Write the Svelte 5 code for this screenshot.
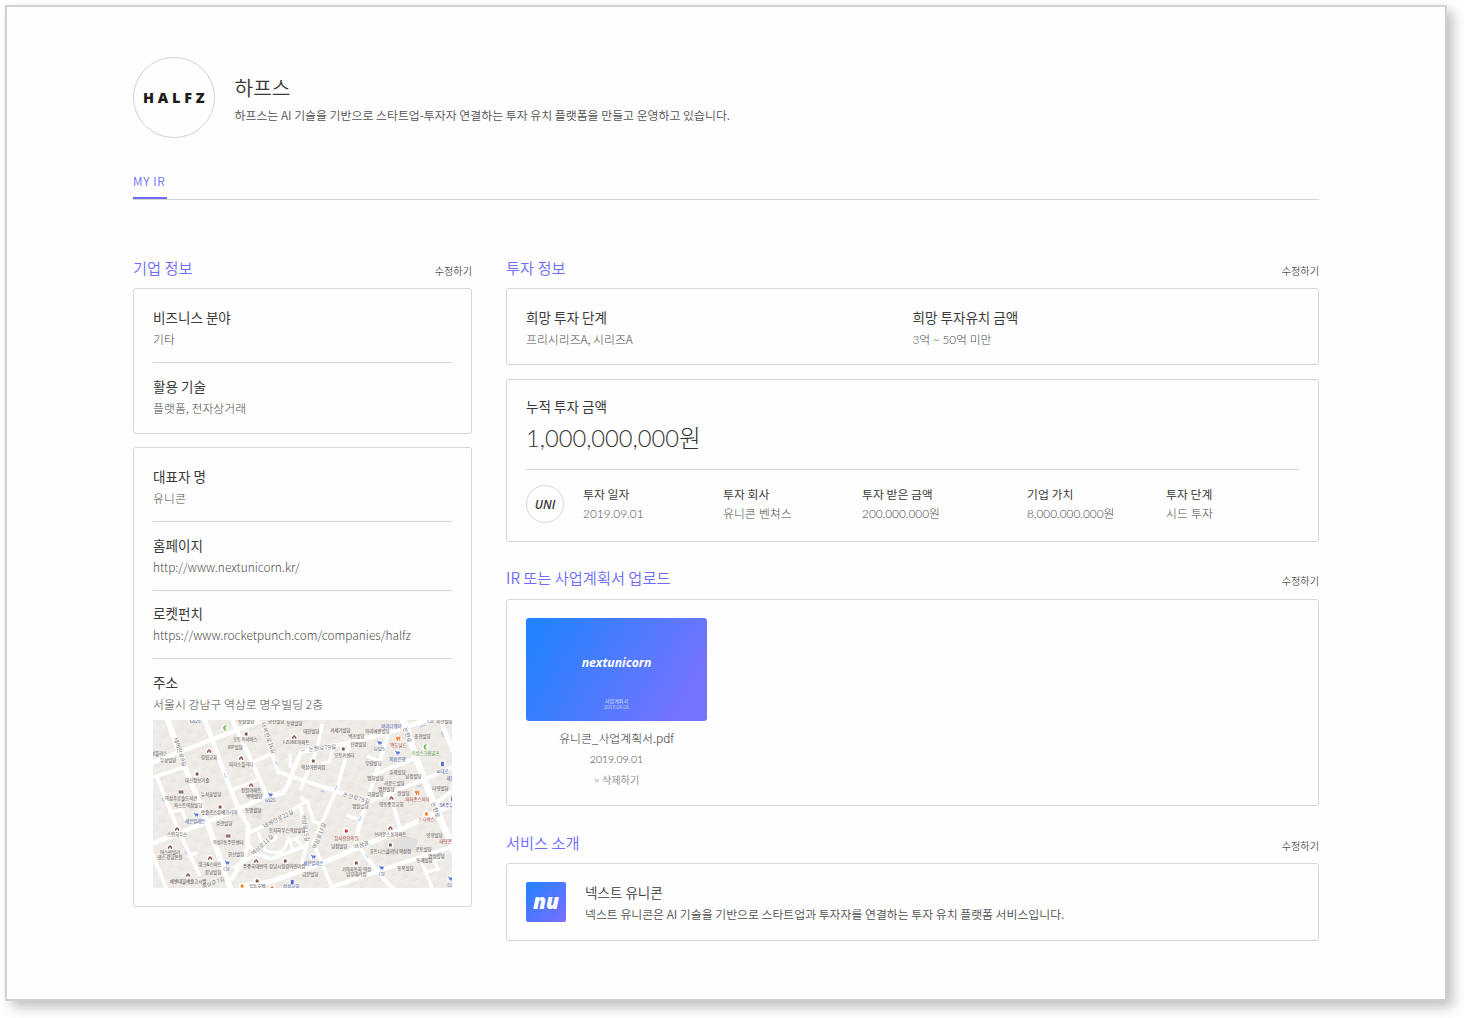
<script>
  const companyItems = [
    { label: '비즈니스 분야', value: '기타' },
    { label: '활용 기술', value: '플랫폼, 전자상거래' }
  ];
  const profileItems = [
    { label: '대표자 명', value: '유니콘' },
    { label: '홈페이지', value: 'http://www.nextunicorn.kr/' },
    { label: '로켓펀치', value: 'https://www.rocketpunch.com/companies/halfz' },
    { label: '주소', value: '서울시 강남구 역삼로 명우빌딩 2층' }
  ];
  const investColumns = [
    { label: '투자 일자', value: '2019.09.01' },
    { label: '투자 회사', value: '유니콘 벤쳐스' },
    { label: '투자 받은 금액', value: '200,000,000원' },
    { label: '기업 가치', value: '8,000,000,000원' },
    { label: '투자 단계', value: '시드 투자' }
  ];

  // Streets as [path, width]
  const roads = [
    ['M14 -2L30 42L54 102L78 170', 5.5],
    ['M51 -2L72 55L85 88L95 106L94 127Q92 140 78 160', 4.5],
    ['M-2 43L50 23L107 1', 4.5],
    ['M78 -2L97 38L114 76', 4],
    ['M-2 124L54 102L85 89L114 76L130 73Q136 65 140 50L148 32L165 29L194 23L234 13L279 -2', 4.5],
    ['M3 55L26 112L47 156', 3.5],
    ['M79 70L104 60', 3],
    ['M100 42L120 33M109 3L125 52L152 61L197 76', 3.5],
    ['M95 113L120 102L152 82', 3.5],
    ['M80 148L103 134L95 124M103 134L118 139L152 126', 3.5],
    ['M90 166L120 161L169 143L244 111L300 84', 5],
    ['M-2 131L14 170M-2 58L34 46M34 136L44 133', 3.5],
    ['M105 112L112 130Q130 138 134 122L147 116', 3],
    ['M249 -2L270 58L284 92L301 132', 6.5],
    ['M197 22L184 67L160 123L180 170', 3.5],
    ['M235 14L222 55L209 95L202 122L225 153L241 170', 4],
    ['M176 168L225 151L300 126', 4],
    ['M220 55L262 38M205 86L274 58L300 47', 4],
    ['M237 75L247 110M284 82L300 70', 3.5],
    ['M286 -2L300 32', 4.5],
    ['M147 78L154 81L160 101L169 105M147 85L154 122L147 150', 3.5],
    ['M169 4L164 28L147 70', 3.5],
    ['M268 142L279 168M270 153L285 149L280 141L288 138', 3],
    ['M214 36L224 40M193 95L204 99M137 34L137 48M168 44L176 42L179 30', 3],
    ['M15 92L29 90L33 101M117 122L124 116M135 117L140 130M142 119L151 128', 3]
  ];

  // Place names as [x, y, text, colour class]
  const places = [
    [42, 2.5, 'GS25', 'blue'], [93, 2.5, '동원빌딩', ''], [123, 3, '한진빌딩', ''], [141, 4.5, '동방빌딩', ''],
    [92, 21.5, '오토카서비스', ''], [82, 29, 'VIP빌딩', ''], [143, 24.5, 'I-ZONE아파트', ''],
    [6, 35, '성플러스', ''], [15, 42, '우성빌딩', ''], [56, 39, '강림교회', ''], [88, 46, '이지소플리더', ''],
    [44, 62, '대신정보기술', ''], [98, 72.5, '정원아파트', ''], [101, 78.5, '백악빌딩', ''], [117, 82.5, 'GS25', 'blue'],
    [58, 76.5, '뉴서울빌딩', ''], [28, 80, '역삼푸른솔도서관', ''], [35, 87, '파스트역삼빌딩', ''], [66, 94.5, '벗슬로스유베코리아', ''],
    [100, 92, '동명빌딩', ''], [42, 103.5, '세븐일레븐', 'blue'], [71, 105.5, '수연빌딩', ''],
    [24, 116, '스완하우스', ''], [134, 112.5, '토지하우스역삼빌딩', ''], [75, 124, '역삼1동주민센터', ''],
    [17, 134, '어스만빌리', ''], [17, 139, '댄스 강남본원', ''], [83, 136, '한신빌딩', ''], [57, 146, '위크&스마트', ''],
    [73, 151, 'CU', 'blue'], [60, 154.5, '윤남빌딩', ''], [35, 163, '예벤데블예술고시텔', ''],
    [102, 148, '주중국대번역', ''], [134, 148, '강남시립강어린이집', ''], [104, 168, '힐튼호텔', ''], [138, 168.5, '삼성교회', 'blue'],
    [158, 13.5, '대한빌딩', ''], [187, 12.5, '카세기빌딩', ''], [203, 18.5, '백조빌딩', ''], [224, 13, '아이에센빌딩', ''], [205, 26, '진명빌딩', ''],
    [238, 8, '바이더웨이', 'blue'], [277, 3, 'CU', 'blue'], [291, 3, '서산빌딩', ''], [269, 18.5, '충전빌딩', ''],
    [226, 31, 'GS25', 'blue'], [245, 27, '맥도날드', 'red'], [244, 41, '외환은행', 'blue'], [272, 35.5, '역삼스크린골프', 'green'],
    [191, 37.5, '오토카센터', ''], [160, 49.5, '역삼어린이집', ''], [220, 45.5, '우람빌딩', ''], [289, 53, '씨대로', 'blue'],
    [244, 54, '효제빌딩', ''], [222, 60, '명화빌딩', ''], [260, 58, '남정빌딩', ''], [241, 65, '라운드빌딩', ''], [297, 60, '세븐', 'blue'],
    [233, 71, '명진빌딩', ''], [222, 76, '이화빌딩', ''], [250, 75, '원빌딩', ''], [287, 70, '다영빌딩', ''], [264, 81, '파파존스피자', 'red'],
    [207, 88, '명원빌딩', ''], [238, 86, '영동중앙교회', ''], [295, 87, 'SK주유소', 'blue'], [273, 101.5, '스타벅스', 'red'],
    [193, 120, '참사랑한의원', 'red'], [237, 116, '브라운스톤아파트', ''], [186, 128.5, '남정빌딩', ''], [281, 117, '양양빌딩', ''],
    [294, 123.5, '태영면옥', 'red'], [237, 133, '휴트니스클리닉 역삼점', ''], [270, 131.5, '로토빌딩', ''], [283, 138, '명립빌딩', ''], [271, 142.5, '동혜빌딩', ''],
    [160, 145, '세븐일레븐', 'blue'], [157, 156, '금문빌딩', ''], [203, 151, '기아자동차 역삼', ''], [203, 156, '남부대리점', ''],
    [228, 156, 'CU', 'blue'], [252, 150, '동복빌딩', ''], [297, 167, 'CU', 'blue']
  ];

  // Street names as [x, y, rotation, text]
  const streets = [
    [27, 32, 72, '테헤란로8길'], [115, 18, 70, '테헤란로16길'], [125, 99, -27, '테헤란로22길'], [109, 125, -42, '역삼로11길'],
    [60, 163, -20, '역삼로7길'], [169, 28, -6, '논현로79길'], [203, 78, 17, '논현로75길'], [254, 15, 72, '논현로'],
    [282, 90, 72, '논현로'], [208, 125, -17, '역삼로'], [152, 108, 82, '역삼로15길'], [166, 116, -68, '역삼로17길']
  ];

  // Map pins as [x, y, kind]
  const pins = [
    [93, 14, 'brown'], [141, 17, 'home'], [56, 31, 'home'], [88, 38, 'home'], [44, 54, 'brown'], [98, 65, 'home'],
    [28, 72, 'book'], [67, 87, 'brown'], [24, 109, 'home'], [75, 116, 'book'], [17, 127, 'home'], [57, 138, 'home'],
    [35, 155, 'home'], [103, 141, 'home'], [132, 141, 'brown'], [104, 161, 'brown'], [89, 166, 'orange'], [119, 168, 'orange'],
    [117, 75, 'cart'], [43, 95, 'cart'], [74, 143, 'cart'], [139, 162, 'bank'], [72, 8, 'green'],
    [190, 29, 'brown'], [160, 41, 'brown'], [226, 23, 'cart'], [244, 33, 'cart'], [245, 19, 'food'], [272, 27, 'green'],
    [289, 44, 'bank'], [264, 73, 'food'], [238, 78, 'home'], [273, 94, 'orange'], [193, 111, 'red'], [237, 108, 'home'],
    [237, 125, 'brown'], [203, 143, 'brown'], [160, 137, 'cart'], [228, 148, 'cart'], [297, 159, 'cart'], [299, 79, 'bank']
  ];
</script>

{#snippet sectionHead(title)}
  <div class="section-head">
    <h2>{title}</h2>
    <a class="edit" href="#edit">수정하기</a>
  </div>
{/snippet}

<main class="frame">
  <header class="profile">
    <div class="logo"><span>HALFZ</span></div>
    <div class="intro">
      <h1>하프스</h1>
      <p>하프스는 AI 기술을 기반으로 스타트업-투자자 연결하는 투자 유치 플랫폼을 만들고 운영하고 있습니다.</p>
    </div>
  </header>

  <nav class="tabs"><span class="tab">MY IR</span></nav>

  <div class="columns">
    <div class="side">
      {@render sectionHead('기업 정보')}
      <section class="card company">
        {#each companyItems as item}
          <div class="item"><h3>{item.label}</h3><p>{item.value}</p></div>
        {/each}
      </section>
      <section class="card person">
        {#each profileItems as item}
          <div class="item"><h3>{item.label}</h3><p>{item.value}</p></div>
        {/each}
        <svg class="map" viewBox="0 0 298.5 168" preserveAspectRatio="none">
          <defs>
            <pattern id="lots" width="17" height="13" patternUnits="userSpaceOnUse" patternTransform="rotate(-22)">
              <rect width="17" height="13" fill="#f0ece8" />
              <rect x="1" y="1" width="8" height="5" fill="#edeae5" />
              <rect x="10" y="7" width="6" height="5" fill="#eeeae6" />
              <path d="M0 6.5H9M9.5 12.5H16.5" stroke="#e2deda" stroke-width=".6" />
            </pattern>
          </defs>
          <rect width="298.5" height="168" fill="url(#lots)" />
          <path d="M101 86l9 3-2 11-9-3zM98 66l10 1 2 11-11 1zM231 122l22-6 12 4-5 12-27 4z" fill="#e2e0de" />
          {#each roads as [d, width]}
            <path {d} fill="none" stroke="#fff" stroke-width={width} stroke-linejoin="round" />
          {/each}
          <path class="arrows" d="M71 53l2 5M9 78l2 4M32 131l2 4M122 41l2 4M167 71l4 1M184 65l-2 5M263 67l5-2M208 96l-2 5M212 134l3 4M288 12l2 5M267 7l5-2M148 31l4-1M284 134l4-1" />
          {#each pins as [x, y, kind]}
            <g transform="translate({x} {y})">
              <circle r="3.4" fill="#fff" opacity=".7" />
              {#if kind === 'cart'}
                <path d="M-2.3 -1.8h1l.7 2.6h2.1l.6-1.9h-2.9" fill="#5b78d8" stroke="#5b78d8" stroke-width=".8" />
                <path d="M-.7 1.9h.5M1.2 1.9h.5" stroke="#5b78d8" />
              {:else if kind === 'home'}
                <path d="M-2.1 0L0 -2.1L2.1 0V1.7H.7V.4H-.7V1.7H-2.1Z" fill="#8d625b" />
              {:else if kind === 'book'}
                <path d="M-2.2 -1.4H2.2V1.6H-2.2ZM0 -1V1.3" fill="#85675f" stroke="#c3a8a2" stroke-width=".5" />
              {:else if kind === 'food'}
                <path d="M-1.8 -2.2V0H-.2V-2.2M-1 -2.2V2.2M1.4 2.2V-2.2Q.5 -1.5 .7 .2H1.4" fill="none" stroke="#f17b28" stroke-width=".9" />
              {:else if kind === 'green'}
                <path d="M1.3 -2.2Q-1.2 -2.2 -1.2 0Q-1.2 2.2 1.3 2M-1 0H1" fill="none" stroke="#58b83b" stroke-width="1.1" />
              {:else if kind === 'bank'}
                <path d="M-1.4 -2.2H1.4V2.2H-1.4Z" fill="#4d6ed5" />
              {:else}
                <rect class={kind} x="-1.4" y="-1.4" width="2.8" height="2.8" rx=".5" />
              {/if}
            </g>
          {/each}
          {#each streets as [x, y, angle, name]}
            <text class="street" transform="translate({x} {y}) rotate({angle})" dy="2">{name}</text>
          {/each}
          {#each places as [x, y, name, tone]}
            <text class="place {tone}" {x} {y}>{name}</text>
          {/each}
        </svg>
      </section>
    </div>

    <div class="content">
      {@render sectionHead('투자 정보')}
      <section class="card hope">
        <div class="item"><h3>희망 투자 단계</h3><p>프리시리즈A, 시리즈A</p></div>
        <div class="item"><h3>희망 투자유치 금액</h3><p class="num">3억 ~ 50억 미만</p></div>
      </section>
      <section class="card total">
        <h3>누적 투자 금액</h3>
        <p class="amount">1,000,000,000원</p>
        <div class="round">
          <div class="investor">UNI</div>
          {#each investColumns as col}
            <div class="cell"><h4>{col.label}</h4><p>{col.value}</p></div>
          {/each}
        </div>
      </section>

      {@render sectionHead('IR 또는 사업계획서 업로드')}
      <section class="card upload">
        <div class="file">
          <div class="thumb">
            <strong>nextunicorn</strong>
            <small>사업계획서<br />2019.09.01</small>
          </div>
          <p class="name">유니콘_사업계획서.pdf</p>
          <p class="date">2019.09.01</p>
          <p class="delete"><span>×</span> 삭제하기</p>
        </div>
      </section>

      {@render sectionHead('서비스 소개')}
      <section class="card service">
        <div class="app-icon">nu</div>
        <div class="item">
          <h3>넥스트 유니콘</h3>
          <p>넥스트 유니콘은 AI 기술을 기반으로 스타트업과 투자자를 연결하는 투자 유치 플랫폼 서비스입니다.</p>
        </div>
      </section>
    </div>
  </div>
</main>

<style>
  :global(body) {
    min-height: 1018px;
    background: #fff;
  }
  :global(#app) {
    display: flow-root;
    height: 1018px;
    overflow: hidden;
  }
  h1, h2, h3, h4, p {
    margin: 0;
    font-weight: 400;
    white-space: nowrap;
  }
  .frame {
    box-sizing: border-box;
    width: 1442px;
    height: 996px;
    margin: 5px;
    padding: 50px 126px 0;
    border: 2px solid #d0d0d0;
    background: #fefefe;
    box-shadow: 6px 6px 12px rgba(0, 0, 0, 0.25);
    font-family: 'Noto Sans CJK KR', sans-serif;
    color: #3a3a3a;
  }
  .profile {
    display: flex;
    align-items: center;
    gap: 20px;
    height: 81px;
  }
  .logo {
    box-sizing: border-box;
    width: 81.5px;
    height: 81.5px;
    border: 1px solid #d2d2d2;
    border-radius: 50%;
    display: flex;
    align-items: center;
    justify-content: center;
    font: 800 14.4px/20px 'Open Sans', sans-serif;
    letter-spacing: 3.8px;
    color: #1d1a1b;
  }
  .logo span {
    margin: 1px -3.8px 0 0;
  }
  .intro {
    padding-top: 5px;
  }
  h1 {
    font-size: 20.3px;
    line-height: 29px;
    font-weight: 350;
  }
  .intro p {
    font-size: 11.9px;
    line-height: 25px;
    font-weight: 350;
    color: #505050;
  }
  .tabs {
    display: flex;
    height: 61px;
    border-bottom: 1px solid #d4d4d4;
  }
  .tab {
    box-sizing: border-box;
    width: 34px;
    height: 61px;
    padding-top: 33px;
    border-bottom: 2px solid #6c6cff;
    font-size: 11.86px;
    line-height: 20px;
    font-weight: 350;
    letter-spacing: 0.6px;
    color: #6c6cff;
    white-space: nowrap;
  }
  .columns {
    display: flex;
    gap: 34px;
    padding-top: 54px;
  }
  .side { width: 339px; }
  .content { width: 813px; }
  .section-head {
    display: flex;
    justify-content: space-between;
    height: 34px;
  }
  h2 {
    font-size: 15.25px;
    line-height: 26px;
    font-weight: 350;
    color: #6c6cff;
  }
  .edit {
    padding-top: 7px;
    font-size: 10.16px;
    line-height: 20px;
    font-weight: 350;
    color: #505050;
    text-decoration: none;
  }
  .card {
    box-sizing: border-box;
    padding: 17px 19px 0;
    border: 1px solid #d6d6d6;
    border-radius: 3px;
  }
  h3 {
    font-size: 13.55px;
    line-height: 22px;
  }
  .item p {
    font-size: 11.86px;
    line-height: 22px;
    font-weight: 300;
    color: #4c4c4c;
  }
  .side .item p {
    letter-spacing: 0.03px;
  }
  .side .item + .item {
    margin-top: 12px;
    padding-top: 11.6px;
    border-top: 1px solid #d4d4d4;
  }
  .company { height: 146px; }
  .person {
    height: 460px;
    margin-top: 13px;
  }
  .map {
    display: block;
    width: 299px;
    height: 168px;
    margin-top: 5px;
  }
  .map text {
    text-anchor: middle;
    font-family: 'Noto Sans CJK KR', sans-serif;
  }
  .place {
    font-size: 4.4px;
    fill: #4c4745;
  }
  .street {
    font-size: 5.8px;
    fill: #777;
    stroke: #fff;
    stroke-width: 1px;
    paint-order: stroke;
  }
  .place.blue { fill: #4358a8; }
  .place.red { fill: #a5483b; }
  .place.green { fill: #3d9134; }
  rect.brown { fill: #84554e; }
  rect.orange { fill: #f27a1c; }
  rect.red { fill: #e52d28; }
  .arrows {
    stroke: #8fb4ef;
    stroke-width: 0.8;
  }
  .hope {
    display: grid;
    grid-template-columns: 1fr 1fr;
    height: 77px;
  }
  .item p.num, .amount, .cell p, .date, .thumb small {
    font-family: Lato, 'Noto Sans CJK KR', sans-serif;
    font-weight: 300;
  }
  .item p.num {
    padding-top: 1px;
    letter-spacing: -0.2px;
  }
  .total {
    height: 163px;
    margin: 14px 0 22px;
    padding-top: 15px;
  }
  .amount {
    height: 43px;
    font-size: 23.7px;
    line-height: 42px;
    color: #333;
  }
  .round {
    display: grid;
    grid-template-columns: 57px 140px 139px 165px 139px 1fr;
    margin-top: 9px;
    padding-top: 15px;
    border-top: 1px solid #d4d4d4;
  }
  .investor {
    box-sizing: border-box;
    width: 38px;
    height: 38px;
    border: 1px solid #d8d8d8;
    border-radius: 50%;
    font: italic 600 12px/38px 'Open Sans', sans-serif;
    text-align: center;
  }
  h4 {
    margin-top: -1px;
    font-size: 11.86px;
    line-height: 19px;
  }
  .cell p {
    margin-top: 1px;
    font-size: 11.86px;
    line-height: 20px;
    color: #4c4c4c;
  }
  .upload {
    height: 207px;
    margin: 1px 0 23px;
    padding-top: 18px;
  }
  .file {
    width: 181px;
    text-align: center;
  }
  .thumb {
    box-sizing: border-box;
    height: 103px;
    padding-top: 35px;
    border-radius: 3px;
    background: linear-gradient(120deg, #2183ff 5%, #7373ff 85%);
    color: #fff;
  }
  .thumb strong {
    display: block;
    font: italic 700 12.2px/20px 'Noto Sans', sans-serif;
  }
  .thumb small {
    display: block;
    margin-top: 25px;
    font-size: 5px;
    line-height: 6.3px;
  }
  .name {
    margin-top: 6px;
    font-size: 11.86px;
    line-height: 22px;
    font-weight: 300;
    color: #333;
  }
  .date {
    font-size: 10.4px;
    line-height: 20px;
    color: #333;
  }
  .delete {
    font-size: 10.16px;
    line-height: 21px;
    font-weight: 350;
    color: #888;
  }
  .delete span {
    font-family: Lato, sans-serif;
  }
  .service {
    display: flex;
    gap: 19px;
    height: 78px;
    padding-top: 18px;
  }
  .service .item {
    margin-top: -1px;
  }
  .app-icon {
    width: 40px;
    height: 40px;
    border-radius: 2px;
    background: linear-gradient(135deg, #2183ff, #7b6cff);
    color: #fff;
    font: italic 800 21px/38px 'Open Sans', sans-serif;
    text-align: center;
  }
  .service .item h3 { font-weight: 350; }
  .service .item p {
    font-weight: 350;
    color: #505050;
  }
</style>
